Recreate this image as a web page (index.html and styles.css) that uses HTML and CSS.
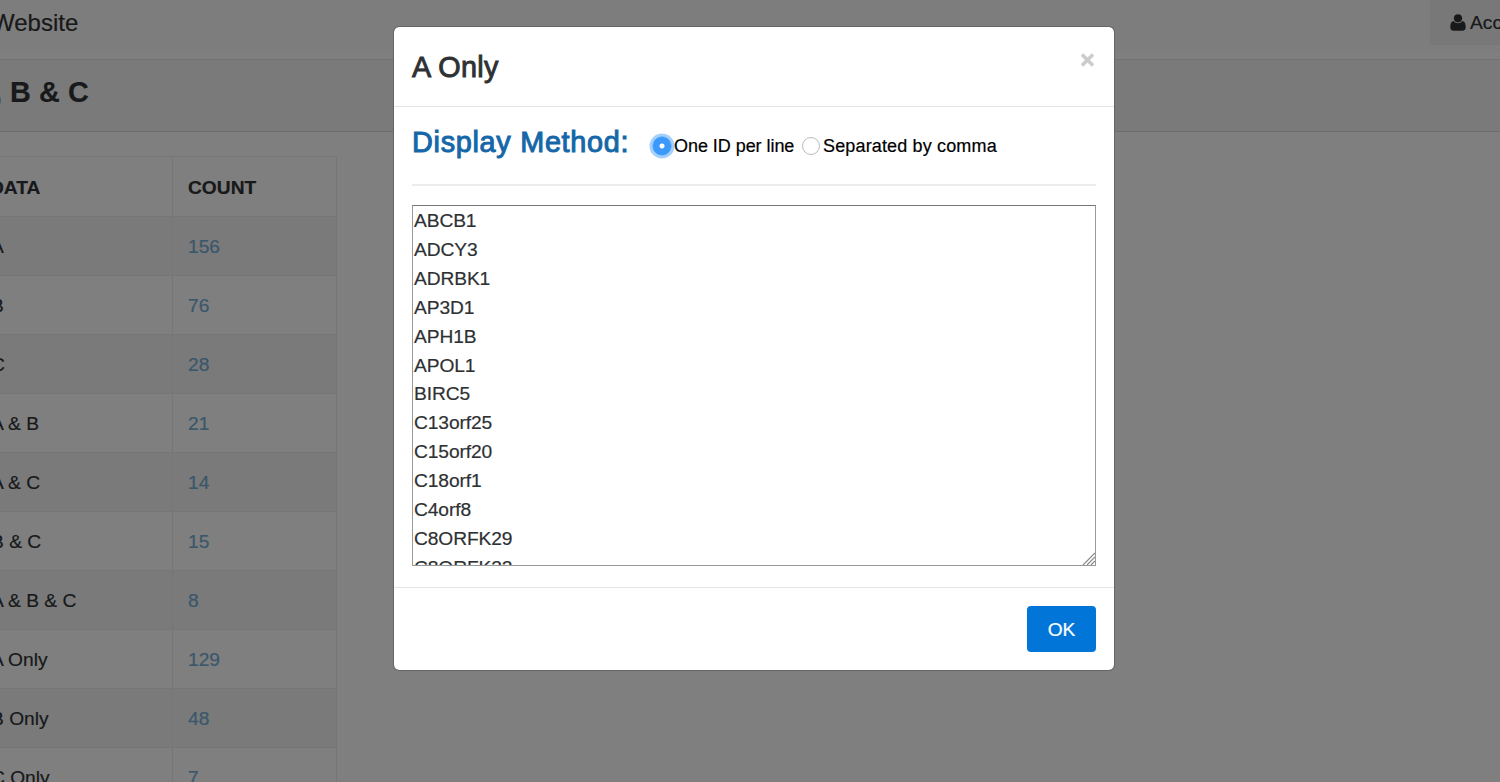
FILE: index.html
```html
<!DOCTYPE html>
<html lang="en">
<head>
<meta charset="utf-8">
<title>Website</title>
<link rel="stylesheet" href="styles.css">
</head>
<body>
<div class="page">
  <header class="navbar">
    <span class="brand">Website</span>
    <a class="account"><svg class="user" width="16" height="17" viewBox="0 0 16 17"><circle cx="8" cy="4.3" r="4.1"/><path d="M3.6 7C1 7.6.3 10 .3 13.2.3 15.500 1.500 16.700 3.500 16.700h9c2 0 3.200-1.200 3.200-3.500C15.700 10 15 7.600 12.400 7 10 10 6 10 3.600 7z"/></svg>Account</a>
  </header>
  <section class="heading"><h1><a>A,</a> B &amp; C</h1></section>
  <main class="content">
    <table class="counts">
      <tr><th>DATA</th><th>COUNT</th></tr>
      <tr><td>A</td><td><a>156</a></td></tr>
      <tr><td>B</td><td><a>76</a></td></tr>
      <tr><td>C</td><td><a>28</a></td></tr>
      <tr><td>A &amp; B</td><td><a>21</a></td></tr>
      <tr><td>A &amp; C</td><td><a>14</a></td></tr>
      <tr><td>B &amp; C</td><td><a>15</a></td></tr>
      <tr><td>A &amp; B &amp; C</td><td><a>8</a></td></tr>
      <tr><td>A Only</td><td><a>129</a></td></tr>
      <tr><td>B Only</td><td><a>48</a></td></tr>
      <tr><td>C Only</td><td><a>7</a></td></tr>
    </table>
    <div class="circle"></div>
  </main>
</div>
<div class="backdrop">
  <div class="modal">
    <div class="modal-header">
      <h2>A Only</h2>
      <svg class="close" width="15" height="14" viewBox="0 0 15 14"><path d="M2 1.500l11 11M13 1.500l-11 11"/></svg>
    </div>
    <div class="modal-body">
      <div class="method">
        <h3>Display Method:</h3>
        <label><span class="radio checked"></span><span class="one">One ID per line</span></label>
        <label><span class="radio"></span><span class="sep">Separated by comma</span></label>
      </div>
      <div class="ids">ABCB1
ADCY3
ADRBK1
AP3D1
APH1B
APOL1
BIRC5
C13orf25
C15orf20
C18orf1
C4orf8
C8ORFK29
C8ORFK32<svg class="grip" width="13" height="13" viewBox="0 0 13 13"><path d="M1 13L13 1M5 13l8-8M9 13l4-4"/></svg></div>
    </div>
    <div class="modal-footer"><button class="ok">OK</button></div>
  </div>
</div>
</body>
</html>
```
FILE: styles.css
```css
* { box-sizing: border-box; }
body {
  margin: 0;
  height: 782px;
  overflow: hidden;
  font: 19.2px/28.8px "Liberation Sans", Arial, sans-serif;
  color: #2e3133;
  background: #fff;
  -webkit-text-stroke: .2px;
}
h1, h2, h3 { margin: 0; font-size: 28.8px; line-height: 32px; }
.page { height: 782px; overflow: hidden; color: #303334; }
.navbar {
  height: 59px;
  display: flex;
  justify-content: space-between;
  align-items: flex-start;
  background: linear-gradient(#fafafa 0, #fafafa 51px, #fff 51px);
}
.brand { margin-left: -8px; padding-top: 9px; font-size: 24px; }
.account {
  width: 70px;
  height: 45px;
  padding: 9px 0 0 20px;
  overflow: hidden;
  display: flex;
  gap: 4px;
  white-space: nowrap;
  background: #f0f0f0;
}
.user { flex: none; margin-top: 5px; fill: #303334; }
.heading {
  height: 73px;
  padding: 16px 0 0;
  background: #f5f5f5;
  border-top: 1px solid #e4e4e4;
  border-bottom: 1px solid #dcdcdc;
}
.heading h1 { margin-left: -27px; letter-spacing: .1px; }
.heading a { color: #1667a8; }
.content { display: flex; align-items: flex-start; padding-top: 24px; height: 650px; overflow: hidden; }
.counts {
  flex: none;
  width: 363px;
  margin-left: -26px;
  border-collapse: collapse;
  table-layout: fixed;
}
.counts td, .counts th {
  height: 59px;
  padding: 3px 15px 0;
  border: 1px solid #eaeced;
  text-align: left;
  font-weight: normal;
}
.counts th { height: 60px; font-weight: bold; }
.counts td:first-child { width: 198px; padding-left: 16px; }
.counts th:first-child { width: 198px; }
.counts tr:nth-child(even) { background: #f5f5f5; }
.counts a { color: #74aed6; }
.circle { flex: none; width: 400px; height: 400px; margin: 44px 0 0 56px; border-radius: 50%; background: #7da5be; }
.backdrop {
  position: absolute;
  inset: 0;
  display: flex;
  justify-content: center;
  align-items: flex-start;
  padding: 26px 0 0 8px;
  background: rgba(0, 0, 0, .5);
}
.modal {
  width: 722px;
  height: 645px;
  border: 1px solid #666;
  border-radius: 6px;
  background: #fff;
  background-clip: padding-box;
}
.modal-header {
  height: 80px;
  padding: 24px 19px 0 18px;
  display: flex;
  justify-content: space-between;
  border-bottom: 1px solid #e5e5e5;
}
.modal-header h2 { font-weight: 400; letter-spacing: .3px; -webkit-text-stroke: .9px #2e3133; }
.close { margin-top: 2px; stroke: #ccc; stroke-width: 3.600; fill: none; }
.modal-body { height: 481px; padding: 0 18px; border-bottom: 1px solid #e5e5e5; }
.method {
  height: 79px;
  display: flex;
  padding-top: 19px;
  border-bottom: 2px solid #ececec;
}
.method h3 {
  width: 238px;
  color: #1667a8;
  font-weight: 400;
  letter-spacing: .72px;
  white-space: nowrap;
  -webkit-text-stroke: 1px #1667a8;
}
.method label {
  display: flex;
  align-items: center;
  height: 40px;
  margin-right: 8px;
  font-size: 18px;
  color: #000;
  white-space: nowrap;
}
.one { width: 120px; letter-spacing: -.05px; }
.sep { letter-spacing: .15px; }
.radio { width: 18px; height: 18px; margin-right: 3px; border: 1px solid #bbb; border-radius: 50%; }
.checked {
  width: 20px;
  height: 20px;
  margin: 0 2px 0 2px;
  border: 1px solid #69b0fb;
  background: radial-gradient(circle, #fff 0 2px, #3b99fc 3px);
  box-shadow: 0 0 0 2.500px #a5d0fb;
}
.ids {
  position: relative;
  height: 361px;
  margin-top: 19px;
  padding: 1px;
  overflow: hidden;
  border: 1px solid #999;
  border-top-color: #767676;
  white-space: pre-line;
  line-height: 28.9px;
  letter-spacing: -.1px;
}
.grip { position: absolute; right: 0; bottom: 0; stroke: #888; stroke-width: 1.200; }
.modal-footer { padding: 18px 18px 0; display: flex; justify-content: flex-end; }
.ok {
  width: 69px;
  height: 46px;
  padding: 2px 0 0;
  border: 0;
  border-radius: 4px;
  font: inherit;
  color: #fff;
  background: #0275d8;
}
```
